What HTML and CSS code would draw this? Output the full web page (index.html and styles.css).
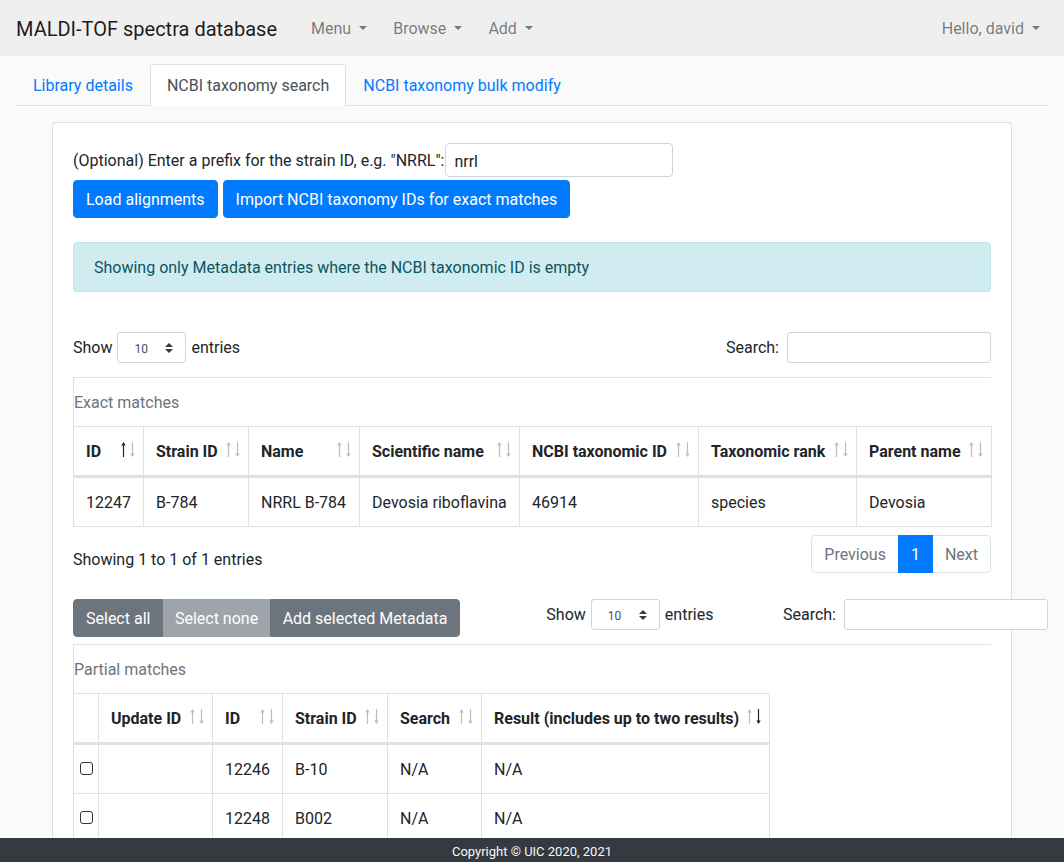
FILE: index.html
```html
<!DOCTYPE html>
<html lang="en">
<head>
<meta charset="utf-8">
<title>MALDI-TOF spectra database</title>
<link rel="stylesheet" href="styles.css">
</head>
<body>
<nav class="navbar">
  <a class="navbar-brand" href="#">MALDI-TOF spectra database</a>
  <ul class="navbar-nav main">
    <li><a class="nav-link dropdown-toggle" href="#">Menu</a></li>
    <li><a class="nav-link dropdown-toggle" href="#">Browse</a></li>
    <li><a class="nav-link dropdown-toggle" href="#">Add</a></li>
  </ul>
  <ul class="navbar-nav right">
    <li><a class="nav-link dropdown-toggle" href="#">Hello, david</a></li>
  </ul>
</nav>

<main class="page">
  <ul class="nav-tabs">
    <li><a class="tab" href="#">Library details</a></li>
    <li><a class="tab active" href="#">NCBI taxonomy search</a></li>
    <li><a class="tab" href="#">NCBI taxonomy bulk modify</a></li>
  </ul>

  <div class="tab-content">
    <div class="card">
      <div class="card-body">
        <div class="prefix-row">
          <label for="prefix">(Optional) Enter a prefix for the strain ID, e.g. "NRRL":</label>
          <input id="prefix" class="prefix-input" type="text" value="nrrl">
        </div>
        <div class="btn-row">
          <button class="btn btn-primary" type="button">Load alignments</button>
          <button class="btn btn-primary" type="button">Import NCBI taxonomy IDs for exact matches</button>
        </div>

        <div class="alert">Showing only Metadata entries where the NCBI taxonomic ID is empty</div>

        <section class="dt dt-exact">
          <div class="dt-top">
            <div class="dt-length">Show
              <span class="select-sm"><span class="select-val">10</span><svg class="select-arrow" width="8" height="10" viewBox="0 0 4 5"><path fill="#343a40" d="M2 0L0 2h4zm0 5L0 3h4z"/></svg></span>
              entries</div>
            <div class="dt-filter">Search:<input class="search-input" type="search"></div>
          </div>
          <div class="dt-box">
            <div class="caption">Exact matches</div>
            <table class="dtable exact">
              <thead>
                <tr>
                  <th class="sorting asc col-id">ID<svg class="sort-icon" width="14" height="15" viewBox="0 0 14 15"><path class="up" d="M1.9 15V3.5H0.3L2.5 0l2.2 3.5H3.1V15z"/><path class="down" d="M10.9 0v11.5H9.3L11.5 15l2.2-3.5H12.1V0z"/></svg></th>
                  <th class="sorting col-strain">Strain ID<svg class="sort-icon" width="14" height="15" viewBox="0 0 14 15"><path class="up" d="M1.9 15V3.5H0.3L2.5 0l2.2 3.5H3.1V15z"/><path class="down" d="M10.9 0v11.5H9.3L11.5 15l2.2-3.5H12.1V0z"/></svg></th>
                  <th class="sorting col-name">Name<svg class="sort-icon" width="14" height="15" viewBox="0 0 14 15"><path class="up" d="M1.9 15V3.5H0.3L2.5 0l2.2 3.5H3.1V15z"/><path class="down" d="M10.9 0v11.5H9.3L11.5 15l2.2-3.5H12.1V0z"/></svg></th>
                  <th class="sorting col-sci">Scientific name<svg class="sort-icon" width="14" height="15" viewBox="0 0 14 15"><path class="up" d="M1.9 15V3.5H0.3L2.5 0l2.2 3.5H3.1V15z"/><path class="down" d="M10.9 0v11.5H9.3L11.5 15l2.2-3.5H12.1V0z"/></svg></th>
                  <th class="sorting col-taxid">NCBI taxonomic ID<svg class="sort-icon" width="14" height="15" viewBox="0 0 14 15"><path class="up" d="M1.9 15V3.5H0.3L2.5 0l2.2 3.5H3.1V15z"/><path class="down" d="M10.9 0v11.5H9.3L11.5 15l2.2-3.5H12.1V0z"/></svg></th>
                  <th class="sorting col-rank">Taxonomic rank<svg class="sort-icon" width="14" height="15" viewBox="0 0 14 15"><path class="up" d="M1.9 15V3.5H0.3L2.5 0l2.2 3.5H3.1V15z"/><path class="down" d="M10.9 0v11.5H9.3L11.5 15l2.2-3.5H12.1V0z"/></svg></th>
                  <th class="sorting col-parent">Parent name<svg class="sort-icon" width="14" height="15" viewBox="0 0 14 15"><path class="up" d="M1.9 15V3.5H0.3L2.5 0l2.2 3.5H3.1V15z"/><path class="down" d="M10.9 0v11.5H9.3L11.5 15l2.2-3.5H12.1V0z"/></svg></th>
                </tr>
              </thead>
              <tbody>
                <tr>
                  <td>12247</td>
                  <td>B-784</td>
                  <td>NRRL B-784</td>
                  <td>Devosia riboflavina</td>
                  <td>46914</td>
                  <td>species</td>
                  <td>Devosia</td>
                </tr>
              </tbody>
            </table>
          </div>
          <div class="dt-bottom">
            <div class="dt-info">Showing 1 to 1 of 1 entries</div>
            <ul class="pagination">
              <li><a class="page-link first" href="#">Previous</a></li>
              <li><a class="page-link active" href="#">1</a></li>
              <li><a class="page-link last" href="#">Next</a></li>
            </ul>
          </div>
        </section>

        <section class="dt dt-partial">
          <div class="dt-top wide">
            <div class="btn-group">
              <button class="btn btn-secondary" type="button">Select all</button>
              <button class="btn btn-secondary disabled" type="button">Select none</button>
              <button class="btn btn-secondary" type="button">Add selected Metadata</button>
            </div>
            <div class="dt-length">Show
              <span class="select-sm"><span class="select-val">10</span><svg class="select-arrow" width="8" height="10" viewBox="0 0 4 5"><path fill="#343a40" d="M2 0L0 2h4zm0 5L0 3h4z"/></svg></span>
              entries</div>
            <div class="dt-filter">Search:<input class="search-input" type="search"></div>
          </div>
          <div class="dt-box">
            <div class="caption">Partial matches</div>
            <table class="dtable partial">
              <thead>
                <tr>
                  <th class="col-check"></th>
                  <th class="sorting col-update">Update ID<svg class="sort-icon" width="14" height="15" viewBox="0 0 14 15"><path class="up" d="M1.9 15V3.5H0.3L2.5 0l2.2 3.5H3.1V15z"/><path class="down" d="M10.9 0v11.5H9.3L11.5 15l2.2-3.5H12.1V0z"/></svg></th>
                  <th class="sorting col-id">ID<svg class="sort-icon" width="14" height="15" viewBox="0 0 14 15"><path class="up" d="M1.9 15V3.5H0.3L2.5 0l2.2 3.5H3.1V15z"/><path class="down" d="M10.9 0v11.5H9.3L11.5 15l2.2-3.5H12.1V0z"/></svg></th>
                  <th class="sorting col-strain">Strain ID<svg class="sort-icon" width="14" height="15" viewBox="0 0 14 15"><path class="up" d="M1.9 15V3.5H0.3L2.5 0l2.2 3.5H3.1V15z"/><path class="down" d="M10.9 0v11.5H9.3L11.5 15l2.2-3.5H12.1V0z"/></svg></th>
                  <th class="sorting col-search">Search<svg class="sort-icon" width="14" height="15" viewBox="0 0 14 15"><path class="up" d="M1.9 15V3.5H0.3L2.5 0l2.2 3.5H3.1V15z"/><path class="down" d="M10.9 0v11.5H9.3L11.5 15l2.2-3.5H12.1V0z"/></svg></th>
                  <th class="sorting desc col-result">Result (includes up to two results)<svg class="sort-icon" width="14" height="15" viewBox="0 0 14 15"><path class="up" d="M1.9 15V3.5H0.3L2.5 0l2.2 3.5H3.1V15z"/><path class="down" d="M10.9 0v11.5H9.3L11.5 15l2.2-3.5H12.1V0z"/></svg></th>
                </tr>
              </thead>
              <tbody>
                <tr>
                  <td class="col-check"><input class="row-check" type="checkbox"></td>
                  <td></td>
                  <td>12246</td>
                  <td>B-10</td>
                  <td>N/A</td>
                  <td>N/A</td>
                </tr>
                <tr>
                  <td class="col-check"><input class="row-check" type="checkbox"></td>
                  <td></td>
                  <td>12248</td>
                  <td>B002</td>
                  <td>N/A</td>
                  <td>N/A</td>
                </tr>
              </tbody>
            </table>
          </div>
        </section>
      </div>
    </div>
  </div>
</main>

<footer class="footer">Copyright © UIC 2020, 2021</footer>
</body>
</html>
```

FILE: styles.css
```css
*, *::before, *::after { box-sizing: border-box; }
html, body { margin: 0; padding: 0; }
body {
  font-family: Roboto, "Liberation Sans", Arial, sans-serif;
  font-size: 16px;
  line-height: 1.5;
  color: #212529;
  background: #fafafa;
}
a { text-decoration: none; }
ul { list-style: none; margin: 0; padding: 0; }
button, input { font-family: inherit; }

/* Navbar */
.navbar {
  display: flex;
  align-items: center;
  height: 56px;
  padding: 8px 16px;
  background: #efefef;
}
.navbar-brand {
  font-size: 20px;
  line-height: 30px;
  padding: 6px 0 4px;
  margin-right: 16px;
  color: rgba(0, 0, 0, .9);
}
.navbar-nav { display: flex; }
.navbar-nav.main { margin-left: 10px; gap: 10px; }
.navbar-nav.right { margin-left: auto; }
.nav-link {
  display: block;
  padding: 9px 8px 7px;
  color: rgba(0, 0, 0, .5);
}
.dropdown-toggle::after {
  content: "";
  display: inline-block;
  margin-left: calc(.255em + 4px);
  vertical-align: .255em;
  border-top: .3em solid;
  border-right: .3em solid transparent;
  border-left: .3em solid transparent;
  border-bottom: 0;
}

/* Tabs */
.page { padding: 8px 16px 0; }
.nav-tabs {
  display: flex;
  border-bottom: 1px solid #dee2e6;
}
.tab {
  display: block;
  margin-bottom: -1px;
  padding: 9px 16px 7px;
  border: 1px solid transparent;
  border-radius: 4px 4px 0 0;
  color: #007bff;
}
.tab.active {
  color: #495057;
  background: #fff;
  border-color: #dee2e6 #dee2e6 #fff;
}
.tab-content { padding-top: 16px; }

/* Card */
.card {
  max-width: 960px;
  margin: 0 auto;
  background: #fff;
  border: 1px solid rgba(0, 0, 0, .125);
  border-radius: 4px;
}
.card-body { padding: 20px; }

.prefix-row {
  display: flex;
  align-items: center;
  gap: 1px;
}
.prefix-row label { padding-top: 2px; }
.prefix-input {
  width: 228px;
  height: 34px;
  padding: 2px 8px 0;
  font-size: 16px;
  color: #212529;
  background: #fff;
  border: 1px solid #ced4da;
  border-radius: 4px;
}
.btn-row {
  display: flex;
  gap: 5px;
  margin-top: 3px;
}
.btn {
  display: block;
  padding: 7px 12px 5px;
  font-size: 16px;
  line-height: 24px;
  color: #fff;
  border: 1px solid transparent;
  border-radius: 4px;
  cursor: pointer;
}
.btn-primary { background: #007bff; border-color: #007bff; }
.btn-secondary { background: #6c757d; border-color: #6c757d; }
.btn.disabled { opacity: .65; padding: 7px 10.5px 5px; }

.btn-group { display: flex; }
.btn-group .btn { border-radius: 0; }
.btn-group .btn:first-child { border-radius: 4px 0 0 4px; }
.btn-group .btn:last-child { border-radius: 0 4px 4px 0; }

.alert {
  margin-top: 24px;
  padding: 13px 20px 11px;
  color: #0c5460;
  background: #d1ecf1;
  border: 1px solid #bee5eb;
  border-radius: 4px;
}

/* DataTables */
.dt-top {
  display: flex;
  align-items: center;
  justify-content: space-between;
  margin-top: 40px;
}
.dt-top.wide {
  width: 975px;
  margin-top: 0;
  align-items: flex-start;
  justify-content: flex-start;
}
.dt-top.wide .dt-length { margin-left: 86px; height: 31px; }
.dt-top.wide .dt-filter { margin-left: auto; }
.dt-partial { margin-top: 24px; }

.dt-length, .dt-filter {
  display: flex;
  align-items: center;
}
.select-sm {
  display: flex;
  align-items: center;
  width: 69px;
  height: 31px;
  margin: 0 5px;
  background: #fff;
  border: 1px solid #ced4da;
  border-radius: 3px;
}
.select-val {
  margin-left: 16px;
  padding-top: 3px;
  font-size: 12px;
  color: #495057;
}
.select-arrow { margin-left: auto; margin-right: 12px; }
.search-input {
  width: 204px;
  height: 31px;
  margin-left: 8px;
  padding: 4px 8px;
  background: #fff;
  border: 1px solid #ced4da;
  border-radius: 3px;
}

.dt-box {
  margin-top: 14px;
  border-top: 1px solid #dee2e6;
  border-left: 1px solid #dee2e6;
}
.dt-partial .dt-box { margin-top: 7px; }
.caption {
  padding: 13px 0 11px;
  color: #6c757d;
}

.dtable {
  border-collapse: separate;
  border-spacing: 0;
  table-layout: fixed;
  border: 1px solid #dee2e6;
  border-left: 0;
}
.dtable.exact { width: 918px; }
.dtable.partial { width: 696px; }
.dtable th, .dtable td {
  padding: 13px 12px 11px;
  text-align: left;
  vertical-align: top;
  white-space: nowrap;
  border-right: 1px solid #dee2e6;
}
.dtable th:last-child, .dtable td:last-child { border-right: 0; }
.dtable th {
  font-weight: 700;
  border-bottom: 2px solid #dee2e6;
}
.dtable td { border-top: 1px solid #dee2e6; }
.dtable th.sorting {
  position: relative;
  padding-right: 30px;
}
.sort-icon {
  position: absolute;
  top: 15px;
  right: 8.5px;
  fill: #212529;
}
.sort-icon path { opacity: .3; }
.asc .sort-icon .up, .desc .sort-icon .down { opacity: 1; }

.col-id { width: 70px; }
.col-strain { width: 105px; }
.col-name { width: 111px; }
.col-sci { width: 160px; }
.col-taxid { width: 179px; }
.col-rank { width: 158px; }
.col-parent { width: 134px; }
.col-check { width: 25px; }
.col-update { width: 114px; }
.col-search { width: 94px; }
.col-result { width: 287px; }
.dtable th.col-check { padding: 13px 0 11px; }
.dtable td.col-check { padding: 13px 0 11px 6px; }
.row-check {
  appearance: none;
  -webkit-appearance: none;
  display: block;
  width: 13px;
  height: 13px;
  margin: 4px 0 0;
  background: #fff;
  border: 1px solid #333;
  border-radius: 3px;
}

.dt-bottom {
  display: flex;
  justify-content: space-between;
  align-items: flex-start;
  margin-top: 6px;
}
.dt-info { padding-top: calc(.85em + 1px); }
.pagination {
  display: flex;
  margin: 2px 0;
}
.page-link {
  display: block;
  margin-left: -1px;
  padding: 9px 12px 7px;
  line-height: 20px;
  color: #6c757d;
  background: #fff;
  border: 1px solid #dee2e6;
}
.page-link.first { margin-left: 0; border-radius: 4px 0 0 4px; }
.page-link.last { border-radius: 0 4px 4px 0; }
.page-link.active {
  position: relative;
  color: #fff;
  background: #007bff;
  border-color: #007bff;
}

/* Footer */
.footer {
  position: fixed;
  left: 0;
  right: 0;
  bottom: 0;
  height: 24px;
  font-size: 13px;
  line-height: 27px;
  text-align: center;
  color: #f8f9fa;
  background: #343a40;
}
```
